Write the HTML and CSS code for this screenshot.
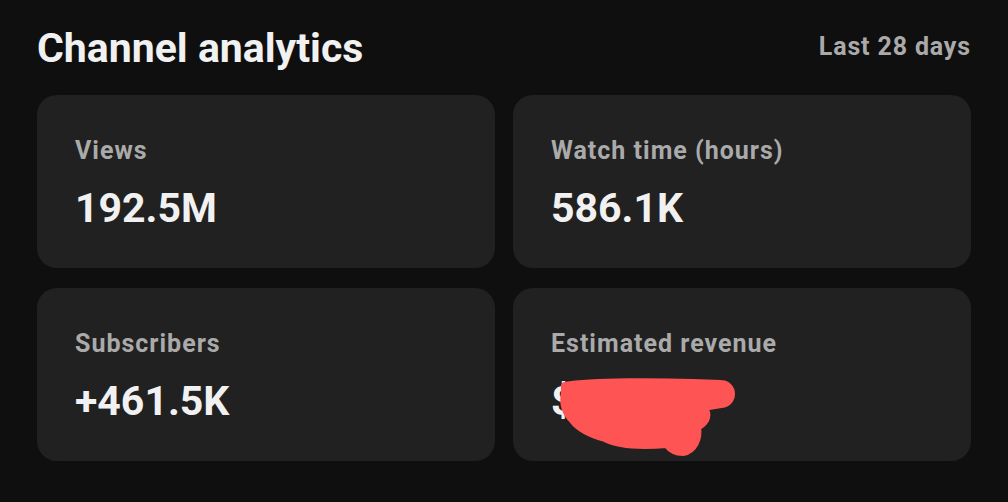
FILE: index.html
```html
<!DOCTYPE html>
<html lang="en">
<head>
<meta charset="utf-8">
<title>Channel analytics</title>
<link rel="stylesheet" href="styles.css">
</head>
<body>
<main class="panel">
  <header class="head">
    <h1 class="title">Channel analytics</h1>
    <span class="range">Last 28 days</span>
  </header>
  <section class="grid">
    <div class="card">
      <div class="label">Views</div>
      <div class="value">192.5M</div>
    </div>
    <div class="card">
      <div class="label">Watch time (hours)</div>
      <div class="value">586.1K</div>
    </div>
    <div class="card">
      <div class="label">Subscribers</div>
      <div class="value">+461.5K</div>
    </div>
    <div class="card">
      <div class="label">Estimated revenue</div>
      <div class="value">$0.00</div>
      <svg class="scribble" viewBox="0 0 458 173" width="458" height="173" aria-hidden="true">
        <path d="M 52 98 C 80 93, 150 94, 180 95 L 208 96 A 10 10 0 0 1 208 116 L 190 119 C 196 126, 194 134, 184 139 C 186 150, 181 162, 170 164 C 162 164, 157 160, 154 156 C 130 158, 105 157, 92 150 C 78 146, 66 140, 60 132 C 53 125, 50 115, 52 105 Z" fill="#fe5454" stroke="#fe5454" stroke-width="8" stroke-linejoin="round"/>
      </svg>
    </div>
  </section>
</main>
</body>
</html>
```

FILE: styles.css
```css
html, body {
  margin: 0;
  padding: 0;
  background: #0f0f0f;
}

body {
  font-family: Roboto, "Noto Sans", "Liberation Sans", sans-serif;
  color: #f1f1f1;
  width: 1008px;
  height: 502px;
  overflow: hidden;
}

.panel {
  padding: 24px 37px 0 37px;
}

.head {
  display: flex;
  justify-content: space-between;
  align-items: flex-start;
  height: 71px;
}

.title {
  margin: 0;
  font-size: 41px;
  font-weight: 700;
  line-height: 48px;
  color: #f1f1f1;
}

.range {
  font-size: 25px;
  font-weight: 700;
  line-height: 48px;
  color: #aaaaaa;
  letter-spacing: 0.85px;
  margin-top: -1px;
}

.grid {
  display: grid;
  grid-template-columns: 458px 458px;
  grid-auto-rows: 173px;
  column-gap: 18px;
  row-gap: 20px;
}

.card {
  position: relative;
  background: #212121;
  border-radius: 20px;
  padding: 41px 38px 0 38px;
  overflow: hidden;
}

.label {
  font-size: 25px;
  font-weight: 700;
  color: #aaaaaa;
  line-height: 30px;
  letter-spacing: 1px;
}

.value {
  margin-top: 19px;
  font-size: 41px;
  font-weight: 700;
  line-height: 46px;
  color: #f1f1f1;
}

.scribble {
  position: absolute;
  left: 0;
  top: 0;
}
```
